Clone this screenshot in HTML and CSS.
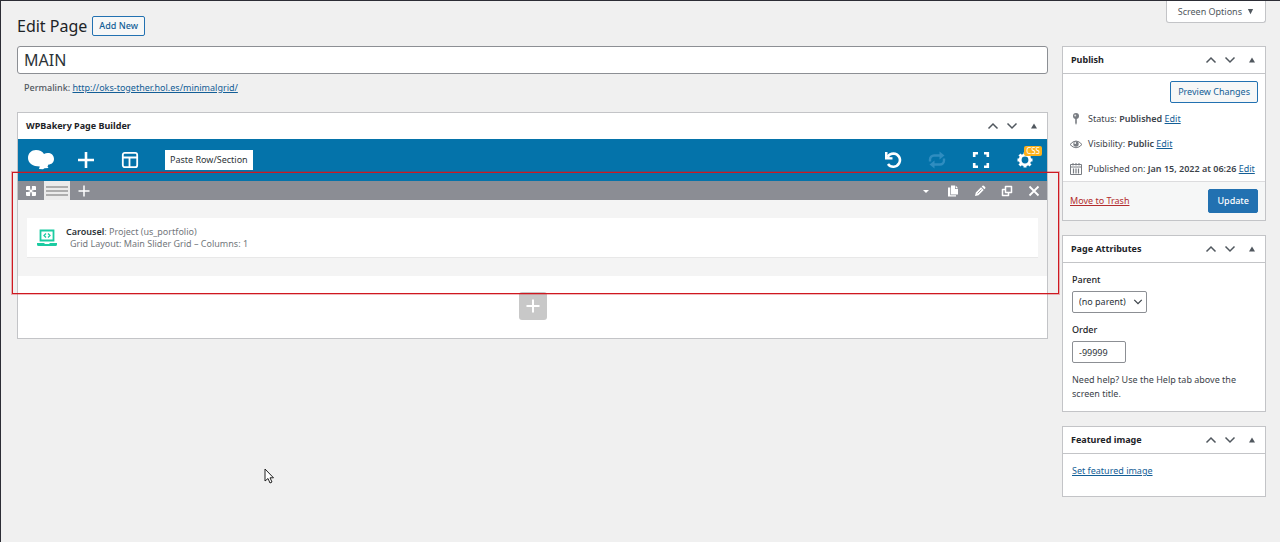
FILE: index.html
```html
<!DOCTYPE html>
<html lang="en">
<head>
    <meta charset="UTF-8">
    <meta name="viewport" content="width=device-width, initial-scale=1.0">
    <title>Edit Page</title>
    <link rel="stylesheet" href="styles.css">
</head>
<body>
    <!-- shared icons -->
    <svg class="sprite" aria-hidden="true">
        <symbol id="up" viewBox="0 0 12 12"><path d="M1.500 8.500 6 4l4.500 4.500" fill="none" stroke="currentColor" stroke-width="1.500"/></symbol>
        <symbol id="down" viewBox="0 0 12 12"><path d="M1.500 3.500 6 8l4.500-4.500" fill="none" stroke="currentColor" stroke-width="1.500"/></symbol>
        <symbol id="toggle" viewBox="0 0 12 12"><path d="M3 8.500 6 3.500l3 5z" fill="currentColor"/></symbol>
    </svg>

    <div class="menu-edge"></div>

    <button class="screen-options">Screen Options <svg viewBox="0 0 8 8"><path d="M1 1h6L4 7z" fill="currentColor"/></svg></button>

    <header class="page-header">
        <h1>Edit Page</h1>
        <a class="button" href="#">Add New</a>
    </header>

    <div class="columns">
        <main class="main">
            <input class="title-input" type="text" value="MAIN" aria-label="Title">
            <p class="permalink"><strong>Permalink:</strong> <a href="#">http://oks-together.hol.es/minimalgrid/</a></p>

            <section class="postbox builder">
                <div class="postbox-header">
                    <h2>WPBakery Page Builder</h2>
                    <button aria-label="Move up"><svg><use href="#up"/></svg></button>
                    <button aria-label="Move down"><svg><use href="#down"/></svg></button>
                    <button class="toggle" aria-label="Toggle panel"><svg><use href="#toggle"/></svg></button>
                </div>

                <div class="toolbar">
                    <a class="tool logo" href="#" aria-label="WPBakery">
                        <svg viewBox="0 0 28 22"><path d="M9 1c3.500 0 6.500 1.500 8 4C18.500 4 20 3.800 22 4c3 .5 5 3 5 6 0 3.300-2.500 5.500-5.500 5.500l-1 2 1 1.500-4 .3-1.500.9-4-.2.800-2.500C6 17.500 1 14 1 9c0-4.800 3.500-8 8-8z" fill="currentColor"/></svg>
                    </a>
                    <button class="tool" aria-label="Add element">
                        <svg viewBox="0 0 18 18"><path d="M9 1v16M1 9h16" stroke="currentColor" stroke-width="2.600"/></svg>
                    </button>
                    <button class="tool" aria-label="Templates">
                        <svg viewBox="0 0 18 18"><rect x="1.800" y="1.800" width="14.400" height="14.400" rx="2" fill="none" stroke="currentColor" stroke-width="1.800"/><path d="M2 6.500h14M8.500 6.500V16" stroke="currentColor" stroke-width="1.800"/></svg>
                    </button>
                    <button class="paste">Paste Row/Section</button>
                    <span class="spacer"></span>
                    <button class="tool" aria-label="Undo">
                        <svg viewBox="0 0 18 18"><path d="M3.500 5.800C5 3.500 7 2.500 9.500 2.500A6.600 6.600 0 1 1 4 13" fill="none" stroke="currentColor" stroke-width="2.600"/><path d="M1 1v7.500h7.500V6.200L3.500 6V1z" fill="currentColor"/></svg>
                    </button>
                    <button class="tool disabled" aria-label="Redo">
                        <svg viewBox="0 0 18 18"><path d="M2 10.500V8.500a4 4 0 0 1 4-4h6.500M16 7.500v2a4 4 0 0 1-4 4H5.500" fill="none" stroke="currentColor" stroke-width="2.400"/><path d="M11.500.5l5 4-5 4zM6.500 9.500l-5 4 5 4z" fill="currentColor"/></svg>
                    </button>
                    <button class="tool" aria-label="Fullscreen">
                        <svg viewBox="0 0 18 18"><path d="M2.200 6V2.200H6M12 2.200h3.800V6M15.800 12v3.800H12M6 15.800H2.200V12" fill="none" stroke="currentColor" stroke-width="2.600"/></svg>
                    </button>
                    <button class="tool" aria-label="Settings">
                        <svg viewBox="0 0 18 18"><circle cx="9" cy="9" r="4.800" fill="none" stroke="currentColor" stroke-width="2.800"/><path d="M9 1.500v3M9 13.500v3M1.500 9h3M13.500 9h3M3.500 3.500l2 2M12.500 12.500l2 2M3.500 14.500l2-2M12.500 5.500l2-2" stroke="currentColor" stroke-width="3"/></svg>
                        <span class="badge">CSS</span>
                    </button>
                </div>

                <div class="row-controls">
                    <button class="drag" aria-label="Drag row">
                        <svg viewBox="0 0 12 12"><rect x="1" y="1" width="10" height="10" rx="1" fill="currentColor"/><path d="M6 .5v3M6 8.500v3M.5 6h3M8.500 6h3" stroke="#8b8d94" stroke-width="1.800"/><path d="M6 2.800 7 4 6 5 5 4zM6 9.200 7 8 6 7 5 8zM2.800 6 4 7l1-1-1-1zM9.200 6 8 7 7 6l1-1z" fill="#8b8d94"/></svg>
                    </button>
                    <button class="layout" aria-label="Row layout">
                        <svg viewBox="0 0 22 12"><path d="M0 2h22M0 6h22M0 10h22" stroke="currentColor" stroke-width="1.500"/></svg>
                    </button>
                    <button aria-label="Add column">
                        <svg viewBox="0 0 12 12"><path d="M6 .5v11M.5 6h11" stroke="currentColor" stroke-width="1.500"/></svg>
                    </button>
                    <span class="spacer"></span>
                    <button aria-label="Toggle row">
                        <svg viewBox="0 0 12 12"><path d="M3 5h6L6 8z" fill="currentColor"/></svg>
                    </button>
                    <button aria-label="Copy row">
                        <svg viewBox="0 0 12 12"><path d="M4 .5h4V4h3v5.500H4z" fill="currentColor"/><path d="M8.700.5 11 3.200H8.700zM1 2.500h2.300v7.800H9v1.200H1z" fill="currentColor"/></svg>
                    </button>
                    <button aria-label="Edit row">
                        <svg viewBox="0 0 12 12"><path d="M1 11l.8-3.500L7 2.300 9.700 5 4.500 10.200zM7.700 1.600l.8-.8q.8-.6 1.600.1l1 1q.7.8.1 1.600l-.8.8z" fill="currentColor"/><path d="M3.500 8.500 7.500 4.500" stroke="#8b8d94" stroke-width=".8"/></svg>
                    </button>
                    <button aria-label="Clone row">
                        <svg viewBox="0 0 12 12"><path d="M4.500 1.500h6v6h-6zM4 4.500H1.500v6h6V8" fill="none" stroke="currentColor" stroke-width="1.500" stroke-linejoin="round"/></svg>
                    </button>
                    <button aria-label="Delete row">
                        <svg viewBox="0 0 12 12"><path d="M1.500 1.500l9 9M10.500 1.500l-9 9" stroke="currentColor" stroke-width="1.800"/></svg>
                    </button>
                </div>

                <div class="row-content">
                    <div class="element">
                        <svg viewBox="0 0 20 18"><path d="M3.500 1.500h13v10h-13z" fill="none" stroke="currentColor" stroke-width="1.800"/><path d="M0 14h7l1 1h4l1-1h7v1.500q0 1.500-1.500 1.500h-17Q0 17 0 15.500z" fill="currentColor"/><path d="M9 4.500l-2 2 2 2M11 4.500l2 2-2 2" fill="none" stroke="currentColor" stroke-width="1.300"/></svg>
                        <div>
                            <p><strong>Carousel</strong>: Project (us_portfolio)</p>
                            <p class="params">Grid Layout: Main Slider Grid – Columns: 1</p>
                        </div>
                    </div>
                </div>

                <div class="builder-footer">
                    <button class="add-row" aria-label="Add row">
                        <svg viewBox="0 0 14 14"><path d="M7 .5v13M.5 7h13" stroke="currentColor" stroke-width="2"/></svg>
                    </button>
                </div>

                <div class="highlight"></div>
            </section>
        </main>

        <aside class="sidebar">
            <section class="postbox">
                <div class="postbox-header">
                    <h2>Publish</h2>
                    <button aria-label="Move up"><svg><use href="#up"/></svg></button>
                    <button aria-label="Move down"><svg><use href="#down"/></svg></button>
                    <button class="toggle" aria-label="Toggle panel"><svg><use href="#toggle"/></svg></button>
                </div>
                <div class="preview"><a class="button" href="#">Preview Changes</a></div>
                <ul class="publish-info">
                    <li>
                        <svg viewBox="0 0 14 14"><circle cx="7" cy="4" r="3" fill="currentColor"/><path d="M6.200 6h1.600v5L7 13l-.8-2z" fill="currentColor"/><circle cx="6.200" cy="3.500" r="1" fill="#ddd"/></svg>
                        <span>Status: <b>Published</b> <a href="#">Edit</a></span>
                    </li>
                    <li>
                        <svg viewBox="0 0 14 14"><path d="M1 7.500q6-7 12 0-6 6.500-12 0z" fill="none" stroke="currentColor"/><circle cx="7" cy="7" r="2.700" fill="currentColor"/><circle cx="6.200" cy="6" r=".9" fill="#fff"/></svg>
                        <span>Visibility: <b>Public</b> <a href="#">Edit</a></span>
                    </li>
                    <li>
                        <svg viewBox="0 0 14 14"><path d="M1.500 2.500h11v10h-11zM1.500 5h11M4 1v2.500M7 1v2.500M10 1v2.500" fill="none" stroke="currentColor"/><path d="M4.500 6.500v5M7 6.500v5M9.500 6.500v5" stroke="currentColor" stroke-width="1.200"/></svg>
                        <span>Published on: <b>Jan 15, 2022 at 06:26</b> <a href="#">Edit</a></span>
                    </li>
                </ul>
                <div class="publish-actions">
                    <a class="trash" href="#">Move to Trash</a>
                    <button class="button primary">Update</button>
                </div>
            </section>

            <section class="postbox">
                <div class="postbox-header">
                    <h2>Page Attributes</h2>
                    <button aria-label="Move up"><svg><use href="#up"/></svg></button>
                    <button aria-label="Move down"><svg><use href="#down"/></svg></button>
                    <button class="toggle" aria-label="Toggle panel"><svg><use href="#toggle"/></svg></button>
                </div>
                <div class="attributes">
                    <label for="parent">Parent</label>
                    <div class="select-wrap">
                        <select id="parent"><option>(no parent)</option></select>
                        <svg><use href="#down"/></svg>
                    </div>
                    <label for="order">Order</label>
                    <input id="order" type="text" value="-99999">
                    <p>Need help? Use the Help tab above the screen title.</p>
                </div>
            </section>

            <section class="postbox">
                <div class="postbox-header">
                    <h2>Featured image</h2>
                    <button aria-label="Move up"><svg><use href="#up"/></svg></button>
                    <button aria-label="Move down"><svg><use href="#down"/></svg></button>
                    <button class="toggle" aria-label="Toggle panel"><svg><use href="#toggle"/></svg></button>
                </div>
                <div class="featured"><a href="#">Set featured image</a></div>
            </section>
        </aside>
    </div>

    <svg class="cursor" viewBox="0 0 10 16"><path d="M1 1v12l3-2.500L6 15l2-1-2-4.200h3.500z" fill="#fff" stroke="#222"/></svg>
</body>
</html>
```

FILE: styles.css
```css
* {
    box-sizing: border-box;
}

body {
    position: relative;
    min-height: 100vh;
    margin: 0;
    padding: 0 14px 0 16px;
    border-top: 1px solid #2c2d35;
    border-left: 1px solid #2c2d35;
    background-color: #f0f0f0;
    color: #3c434a;
    font-family: "Noto Sans", "Open Sans", sans-serif;
    font-size: 9px;
    line-height: 14px;
}

h1, h2, p, ul {
    margin: 0;
    padding: 0;
}

button, input, select {
    margin: 0;
    font: inherit;
    color: inherit;
}

button {
    padding: 0;
    border: none;
    background: none;
}

svg {
    display: block;
    flex: none;
}

a {
    color: #135e96;
}

b, strong {
    font-weight: 600;
}

.sprite {
    position: absolute;
    width: 0;
    height: 0;
}

.spacer {
    flex: 1;
}

/* arrow of the open admin menu item */
.menu-edge {
    position: absolute;
    top: 91px;
    left: -1px;
    width: 1px;
    height: 25px;
    border: solid #72aee6;
    border-width: 7px 0;
    background-color: #f0f0f0;
}

.screen-options {
    position: absolute;
    top: 0;
    right: 14px;
    display: flex;
    align-items: center;
    gap: 5px;
    height: 22px;
    padding: 0 11px;
    border: 1px solid #c3c4c7;
    border-top: none;
    border-radius: 0 0 3px 3px;
    background-color: #fff;
    color: #50575e;
}

.screen-options svg {
    width: 7px;
    height: 7px;
}

.button {
    display: inline-flex;
    align-items: center;
    justify-content: center;
    height: 22px;
    padding: 0 7px;
    border: 1px solid #2271b1;
    border-radius: 2px;
    background-color: #f6f7f7;
    color: #135e96;
    text-decoration: none;
}

.primary {
    height: 24px;
    padding: 0 8px;
    background-color: #2271b1;
    color: #fff;
    font-weight: 500;
}

.page-header {
    display: flex;
    align-items: center;
    gap: 5px;
    height: 45px;
    padding-top: 5px;
}

.page-header h1 {
    color: #1d2327;
    font-size: 16px;
    font-weight: 400;
    line-height: 22px;
}

.page-header .button {
    height: 20px;
    padding: 0 6px;
    font-weight: 500;
}

.columns {
    display: flex;
    align-items: flex-start;
    gap: 14px;
}

.main {
    flex: 1;
    min-width: 0;
}

.sidebar {
    display: flex;
    flex-direction: column;
    gap: 14px;
    width: 204px;
}

.title-input {
    display: block;
    width: 100%;
    height: 28px;
    padding: 0 6px;
    border: 1px solid #8c8f94;
    border-radius: 3px;
    background-color: #fff;
    color: #2c3338;
    font-size: 16px;
}

.permalink {
    padding: 7px 7px 17px;
    color: #50575e;
}

.permalink strong {
    font-weight: 500;
}

.postbox {
    border: 1px solid #c3c4c7;
    background-color: #fff;
}

.postbox-header {
    display: flex;
    align-items: center;
    height: 27px;
    padding: 0 6px 0 8px;
    border-bottom: 1px solid #c3c4c7;
}

.postbox-header h2 {
    flex: 1;
    color: #1d2327;
    font-size: 9px;
    font-weight: 700;
}

.postbox-header button {
    display: flex;
    justify-content: center;
    width: 19px;
    color: #50575e;
}

.postbox-header .toggle {
    width: 14px;
    margin-left: 6px;
}

.postbox-header svg {
    width: 12px;
    height: 12px;
}

/* builder */
.builder {
    position: relative;
}

.builder .postbox-header {
    height: 26px;
    border-bottom: none;
}

.toolbar {
    display: flex;
    align-items: center;
    height: 42px;
    background-color: #0473aa;
    color: #fff;
}

.tool {
    position: relative;
    display: flex;
    align-items: center;
    justify-content: center;
    width: 44px;
    height: 42px;
    color: #fff;
}

.tool svg {
    width: 18px;
    height: 18px;
}

.logo {
    width: 46px;
}

.logo svg {
    width: 28px;
    height: 22px;
}

.disabled {
    color: #2f8dc0;
}

.paste {
    height: 20px;
    margin-left: 13px;
    padding: 0 5px;
    background-color: #fff;
    color: #2c3338;
}

.badge {
    position: absolute;
    top: 7px;
    right: 5px;
    padding: 0 2px;
    border-radius: 2px;
    background-color: #fbb11b;
    font-size: 8px;
    line-height: 10px;
}

.row-controls {
    display: flex;
    height: 19px;
    background-color: #8b8d94;
}

.row-controls button {
    display: flex;
    align-items: center;
    justify-content: center;
    width: 27px;
    color: #fff;
}

.row-controls svg {
    width: 12px;
    height: 12px;
}

.row-controls .drag,
.row-controls .layout {
    width: 26px;
}

.row-controls .layout {
    background-color: #ebebeb;
    color: #999;
}

.row-controls .layout svg {
    width: 22px;
}

.row-content {
    padding: 18px 9px;
    background-color: #f4f4f4;
}

.element {
    display: flex;
    align-items: center;
    gap: 9px;
    height: 40px;
    padding: 0 10px;
    border-bottom: 1px solid #e8e8e8;
    background-color: #fff;
    color: #72777c;
    line-height: 12px;
}

.element svg {
    width: 20px;
    height: 18px;
    color: #1bcba1;
}

.element strong {
    color: #2c3338;
}

.params {
    padding-left: 4px;
}

.builder-footer {
    display: flex;
    justify-content: center;
    padding: 16px 0 18px;
}

.add-row {
    display: flex;
    align-items: center;
    justify-content: center;
    width: 28px;
    height: 28px;
    border-radius: 3px;
    background-color: #c8c8c8;
    color: #fff;
}

.add-row svg {
    width: 14px;
    height: 14px;
}

.highlight {
    position: absolute;
    top: 59px;
    right: -12px;
    left: -6px;
    height: 122px;
    border: 1px solid #cf1820;
    box-shadow: 0 0 0 1px rgba(207, 24, 32, 0.3);
    pointer-events: none;
}

/* sidebar */
.preview {
    display: flex;
    justify-content: flex-end;
    padding: 7px 7px 3px;
}

.publish-info {
    list-style: none;
}

.publish-info li {
    display: flex;
    align-items: center;
    gap: 5px;
    height: 25px;
    padding-left: 6px;
    white-space: nowrap;
}

.publish-info svg {
    width: 14px;
    height: 14px;
    color: #787c82;
}

.publish-actions {
    display: flex;
    align-items: center;
    justify-content: space-between;
    height: 39px;
    padding: 0 7px;
    border-top: 1px solid #dcdcde;
    background-color: #f6f7f7;
}

.trash {
    color: #b32d2e;
}

.attributes {
    display: flex;
    flex-direction: column;
    align-items: flex-start;
    padding: 10px 9px;
}

.attributes label {
    color: #1d2327;
    font-weight: 500;
}

.select-wrap {
    position: relative;
    margin: 4px 0 10px;
}

.attributes select,
.attributes input {
    display: block;
    height: 22px;
    padding: 0 6px;
    border: 1px solid #8c8f94;
    border-radius: 2px;
    background-color: #fff;
    color: #2c3338;
}

.attributes select {
    width: 75px;
    appearance: none;
}

.attributes input {
    width: 54px;
    margin: 4px 0 10px;
}

.select-wrap svg {
    position: absolute;
    top: 6px;
    right: 4px;
    width: 10px;
    height: 10px;
    pointer-events: none;
}

.featured {
    padding: 10px 9px 18px;
}

.cursor {
    position: absolute;
    top: 467px;
    left: 263px;
    width: 10px;
    height: 16px;
}
```
